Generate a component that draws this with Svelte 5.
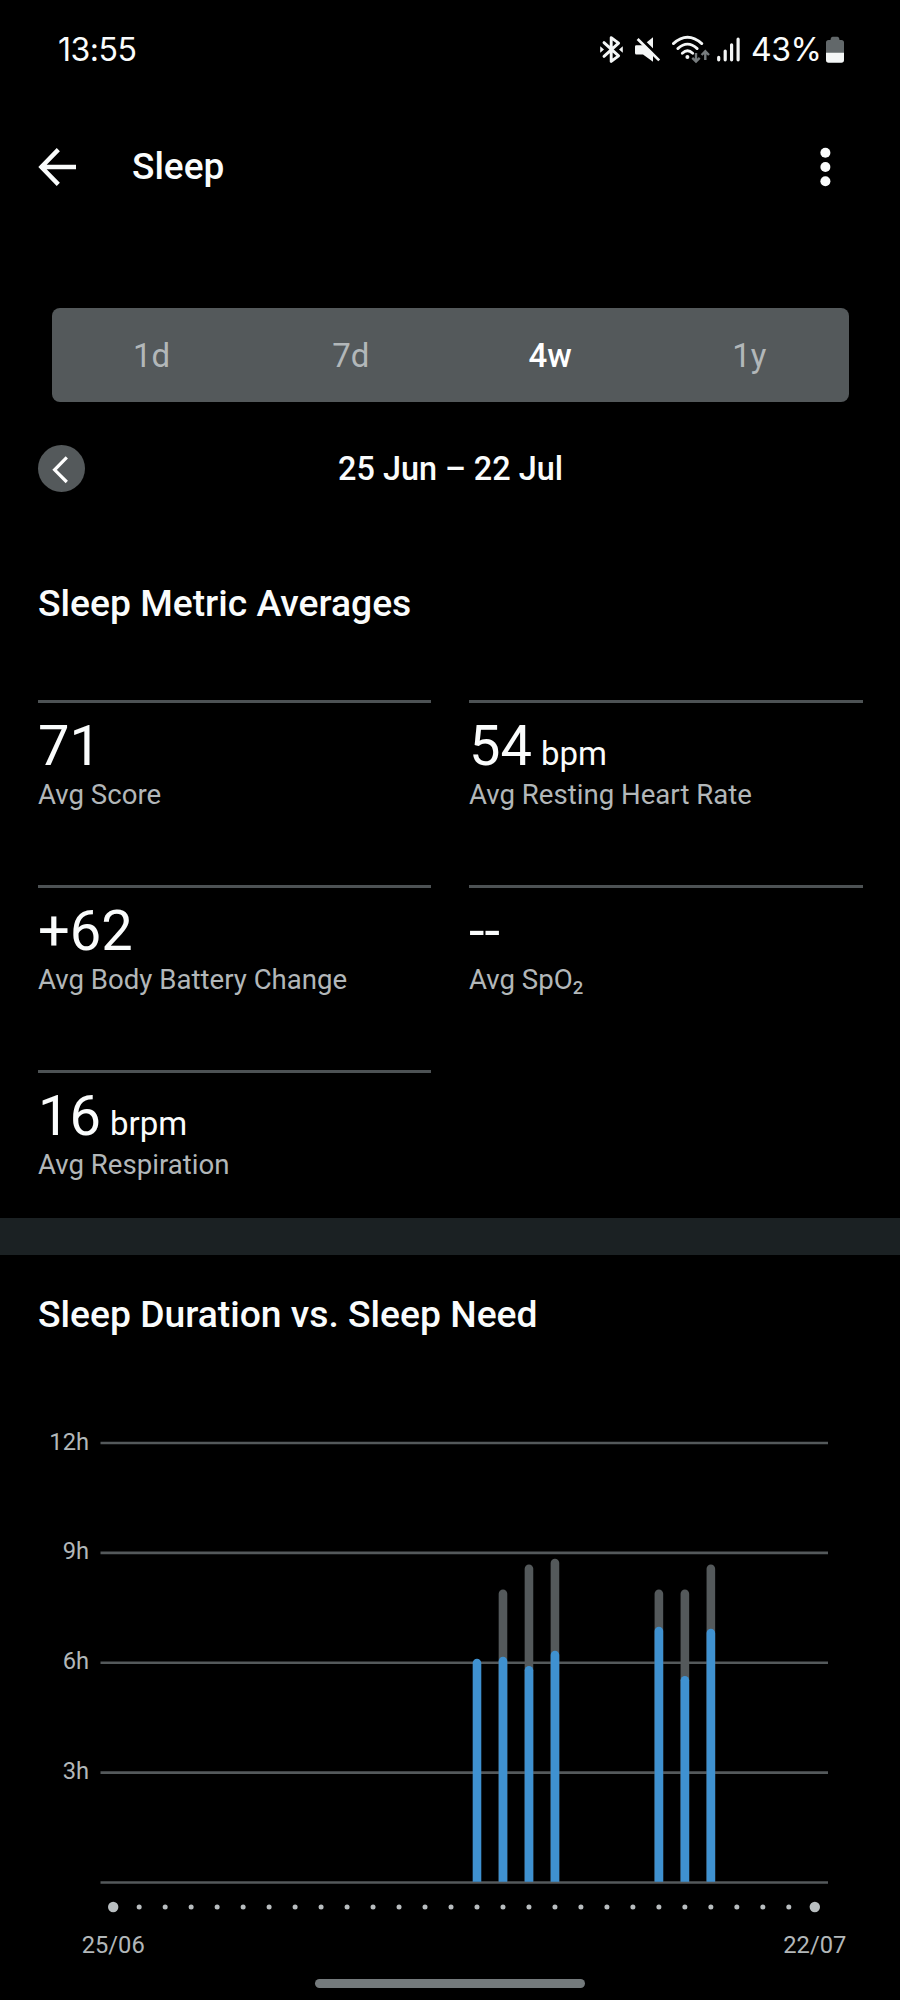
<script>
    let selectedRange = "4w";
    const ranges = ["1d", "7d", "4w", "1y"];

    const metrics = [
        {value: "71", unit: "", label: "Avg Score"},
        {value: "54", unit: "bpm", label: "Avg Resting Heart Rate"},
        {value: "+62", unit: "", label: "Avg Body Battery Change"},
        {value: "--", unit: "", label: "Avg SpO", sub: "2"},
        {value: "16", unit: "brpm", label: "Avg Respiration"},
    ];

    // day is the offset from 25/06, duration and need are in hours
    const nights = [
        {day: 14, duration: 6.11, need: 0},
        {day: 15, duration: 6.16, need: 8},
        {day: 16, duration: 5.91, need: 8.68},
        {day: 17, duration: 6.33, need: 8.84},
        {day: 21, duration: 6.98, need: 8},
        {day: 22, duration: 5.64, need: 8},
        {day: 23, duration: 6.93, need: 8.68},
    ];
    const hourLines = [12, 9, 6, 3, 0];
    const days = Array.from({length: 28}, (_, i) => i);

    const baseY = 462.5;
    const hourHeight = 36.63;
    const barWidth = 8.6;

    function dayX(day) {
        return 113.2 + day * 25.985;
    }

    function hourY(hours) {
        return baseY - hours * hourHeight;
    }

    // bar with a rounded top and a flat bottom
    function barPath(day, hours) {
        const left = dayX(day) - barWidth / 2;
        const r = barWidth / 2;
        const top = hourY(hours) + r;
        return `M${left} ${baseY - 0.8}V${top}a${r} ${r} 0 0 1 ${barWidth} 0V${baseY - 0.8}z`;
    }

    function selectRange(range) {
        selectedRange = range;
    }
</script>

<div class="screen">
    <div class="status-bar">
        <span class="clock">13:55</span>
        <div class="status-icons">
            <svg width="28" height="32" viewBox="0 0 28 32">
                <path d="M6 8.6L20.6 21.8L13.2 27.4V3.6L20.6 9.2L6 22.4" fill="none" stroke="#f4f6f6" stroke-width="2.9" stroke-linejoin="round" stroke-linecap="round" />
                <path d="M2.2 12.2L6 15.5L2.2 18.8z M24.8 12.2L21 15.5L24.8 18.8z" fill="#f4f6f6" />
            </svg>
            <svg class="mute" width="28" height="32" viewBox="0 0 28 32">
                <path d="M3.4 11.2H10L20 3.2V27.8L10 20.6H3.4Q2 20.6 2 19V12.6Q2 11.2 3.4 11.2z" fill="#f4f6f6" />
                <path d="M5 2L27.5 24.2" stroke="#000" stroke-width="3.4" />
                <path d="M4.6 5L26.2 26.4" stroke="#f4f6f6" stroke-width="2.7" />
            </svg>
            <svg class="wifi" width="40" height="32" viewBox="0 0 40 32">
                <g fill="none" stroke="#f4f6f6" stroke-width="2.8" stroke-linecap="round">
                    <path d="M3.4 9.6Q17.5 -3.2 31.8 9.6" />
                    <path d="M7.8 14.6Q17.5 5.6 27.2 14.6" />
                    <path d="M12.3 19.2Q17.5 14.2 22.7 19.2" />
                </g>
                <circle cx="17.4" cy="22.9" r="2" fill="#f4f6f6" />
                <g fill="none" stroke="#777c7e" stroke-width="2.4">
                    <path d="M26 19V27.4M22.3 23.8L26 27.5L29.7 23.8" />
                    <path d="M35.3 26V17.4M31.6 21L35.3 17.3L39 21" />
                </g>
            </svg>
            <svg class="signal" width="30" height="32" viewBox="0 0 30 32">
                <path d="M4.7 23.4V25.8M11.2 17V25.8M17.6 10.8V25.8M24.1 5.2V25.8" stroke="#f4f6f6" stroke-width="3.2" stroke-linecap="round" />
            </svg>
            <span class="percent">43%</span>
            <svg width="22" height="32" viewBox="0 0 22 32">
                <path d="M6.5 6Q6.8 2.8 8.8 2.8H13.2Q15.2 2.8 15.5 6H17.4Q20 6 20 8.6V19H2V8.6Q2 6 4.6 6z" fill="#62686a" />
                <path d="M2 18.7H20V26Q20 28.7 17.4 28.7H4.6Q2 28.7 2 26z" fill="#f4f6f6" />
            </svg>
        </div>
    </div>

    <header class="app-bar">
        <button class="icon-button" aria-label="Back">
            <svg width="40" height="40" viewBox="0 0 40 40">
                <path d="M39 20H5.5M21.3 2.6L4.4 20L21.3 37.4" fill="none" stroke="#fafcfc" stroke-width="4.4" />
            </svg>
        </button>
        <h1>Sleep</h1>
        <button class="icon-button" aria-label="More options">
            <svg width="12" height="40" viewBox="0 0 12 40">
                <circle cx="6.4" cy="5.8" r="5" fill="#fafcfc" />
                <circle cx="6.4" cy="20" r="5" fill="#fafcfc" />
                <circle cx="6.4" cy="34.2" r="5" fill="#fafcfc" />
            </svg>
        </button>
    </header>

    <div class="range-tabs">
        {#each ranges as range}
            <button class:active={range === selectedRange} on:click={() => selectRange(range)}>{range}</button>
        {/each}
    </div>

    <div class="period">
        <button class="previous" aria-label="Previous period">
            <svg width="47" height="47" viewBox="0 0 47 47">
                <path d="M28.8 12.4L16.6 24.8L28.8 37" fill="none" stroke="#fff" stroke-width="3.2" />
            </svg>
        </button>
        <span>25 Jun – 22 Jul</span>
    </div>

    <section class="averages">
        <h2>Sleep Metric Averages</h2>
        <div class="metrics">
            {#each metrics as metric}
                <div class="metric">
                    <p class="value">{metric.value}{#if metric.unit}<span class="unit">{metric.unit}</span>{/if}</p>
                    <p class="label">{metric.label}{#if metric.sub}<sub>{metric.sub}</sub>{/if}</p>
                </div>
            {/each}
        </div>
    </section>

    <div class="divider"></div>

    <section class="duration">
        <h2>Sleep Duration vs. Sleep Need</h2>
        <svg class="chart" width="900" height="545" viewBox="0 0 900 545">
            {#each hourLines as hours}
                <line x1="100.5" x2="828" y1={hourY(hours)} y2={hourY(hours)} stroke="#54595b" stroke-width="2.6" />
                {#if hours > 0}
                    <text x="89" y={hourY(hours) + 6.6} text-anchor="end">{hours}h</text>
                {/if}
            {/each}
            {#each nights as night}
                {#if night.need > 0}
                    <path d={barPath(night.day, night.need)} fill="#54595b" />
                {/if}
                <path d={barPath(night.day, night.duration)} fill="#3f91d0" />
            {/each}
            {#each days as day}
                <circle cx={dayX(day)} cy="487" r={day === 0 || day === 27 ? 5.2 : 2.5} fill="#b9bec0" />
            {/each}
            <text x={dayX(0)} y="533" text-anchor="middle">25/06</text>
            <text x={dayX(27)} y="533" text-anchor="middle">22/07</text>
        </svg>
    </section>

    <div class="home-bar"></div>
</div>

<style>
    :global(body) {
        margin: 0;
        background: #000;
    }

    .screen {
        width: 900px;
        height: 2000px;
        overflow: hidden;
        display: flex;
        flex-direction: column;
        background: #000;
        color: #fafcfc;
        font-family: Roboto, sans-serif;
    }

    button {
        border: none;
        background: none;
        padding: 0;
        color: inherit;
        font-family: inherit;
        cursor: pointer;
    }

    svg {
        display: block;
    }

    h1, h2, p {
        margin: 0;
    }

    h1, h2 {
        font-size: 37px;
        font-weight: 500;
        line-height: 44px;
    }

    h2 {
        font-size: 37.25px;
    }

    .status-bar {
        display: flex;
        justify-content: space-between;
        align-items: center;
        height: 100px;
        padding: 0 54px 0 57px;
        box-sizing: border-box;
        font-family: Inter, Roboto, sans-serif;
        font-size: 32px;
        line-height: 40px;
    }

    .clock {
        margin-left: 1px;
        letter-spacing: -0.5px;
    }

    .status-icons {
        display: flex;
        align-items: center;
    }

    .mute {
        margin-left: 7px;
    }

    .wifi {
        margin-left: 9px;
    }

    .signal {
        margin-left: 4px;
    }

    .percent {
        width: 73px;
        margin-left: 7px;
        letter-spacing: -0.5px;
    }

    .app-bar {
        display: flex;
        align-items: center;
        height: 134px;
        padding: 0 69px 0 37px;
    }

    .app-bar h1 {
        flex: 1;
        margin-left: 55px;
    }

    .range-tabs {
        display: flex;
        height: 94px;
        margin: 74px 51px 0 52px;
        border-radius: 8px;
        background: #54595b;
    }

    .range-tabs button {
        flex: 1;
        font-size: 33px;
        color: #b2b7b9;
    }

    .range-tabs .active {
        color: #fff;
        font-weight: 500;
    }

    .period {
        display: grid;
        grid-template-columns: 47px 1fr 47px;
        align-items: center;
        height: 47px;
        margin: 43px 37px 0 38px;
        font-size: 32.4px;
        font-weight: 500;
        text-align: center;
    }

    .previous {
        width: 47px;
        height: 47px;
        border-radius: 50%;
        background: #54595b;
    }

    .averages {
        height: 726px;
        padding: 89px 37px 0 38px;
        box-sizing: border-box;
    }

    .metrics {
        display: grid;
        grid-template-columns: 393px 394px;
        column-gap: 38px;
        margin-top: 75px;
    }

    .metric {
        height: 185px;
        border-top: 3px solid #4d5254;
        box-sizing: border-box;
    }

    .value {
        margin-top: 10px;
        font-size: 56px;
        line-height: 66px;
    }

    .unit {
        margin-left: 9px;
        font-size: 33px;
        line-height: 0;
    }

    .label {
        margin-top: -1px;
        font-size: 27.6px;
        line-height: 34px;
        color: #b2b7b9;
    }

    .label sub {
        font-size: 18.5px;
        font-weight: 500;
        line-height: 0;
        vertical-align: -5px;
    }

    .divider {
        height: 37px;
        flex: none;
        background: #1b2123;
    }

    .duration h2 {
        padding: 37px 38px 0;
    }

    .chart {
        margin-top: 84px;
    }

    .chart text {
        font-size: 23.7px;
        fill: #b2b7b9;
    }

    .home-bar {
        width: 270px;
        height: 9px;
        margin: 14px auto 0;
        border-radius: 5px;
        background: #747a7c;
    }
</style>
